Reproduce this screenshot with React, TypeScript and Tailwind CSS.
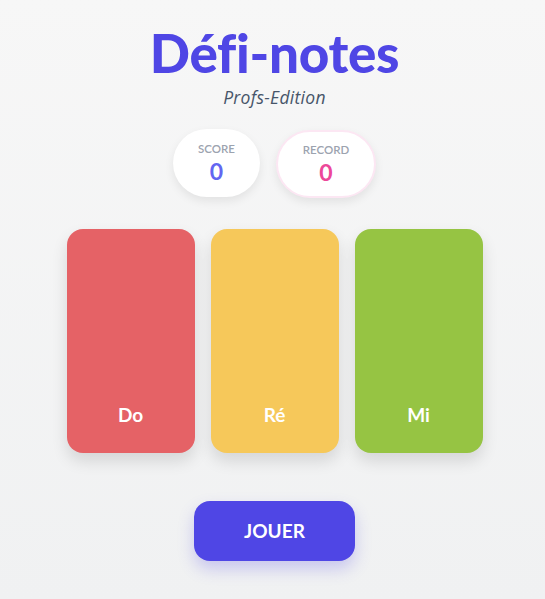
import React from "react";

const notes = [
  { name: "Do", color: "bg-[#e56266]" },
  { name: "Ré", color: "bg-[#f6c85a]" },
  { name: "Mi", color: "bg-[#96c443]" },
];

export default function App() {
  return (
    <div
      className="min-h-[599px] pl-[4px] bg-gradient-to-b from-[#f7f7f7] to-[#f0f1f2] flex flex-col items-center"
      style={{ fontFamily: "Lato, 'Noto Sans', sans-serif" }}
    >
      <h1 className="mt-[24px] text-[53px] leading-[58px] font-black text-[#4f46e5] tracking-[-0.3px]">
        Défi-notes
      </h1>
      <p
        className="mt-[4px] text-[17.5px] leading-[22px] italic text-[#475569] tracking-[0.3px]"
        style={{ fontFamily: "'Open Sans', sans-serif" }}
      >
        Profs-Edition
      </p>

      {/* score / record */}
      <div className="mt-[21px] flex gap-4">
        <div className="w-[87px] h-[68px] rounded-[34px] bg-white shadow-[0_4px_10px_rgba(0,0,0,0.08)] flex flex-col items-center justify-center">
          <span className="text-[11.5px] leading-[14px] font-semibold text-[#9ca3af]">SCORE</span>
          <span className="mt-[2px] text-[23px] leading-[26px] font-bold text-[#6366f1]">0</span>
        </div>
        <div className="w-[100px] h-[68px] mt-px rounded-[34px] bg-white border-2 border-[#fce7f3] shadow-[0_4px_10px_rgba(0,0,0,0.08)] flex flex-col items-center justify-center">
          <span className="text-[11.5px] leading-[14px] font-semibold text-[#9ca3af]">RECORD</span>
          <span className="mt-[2px] text-[23px] leading-[26px] font-bold text-[#ec4899]">0</span>
        </div>
      </div>

      {/* note cards */}
      <div className="mt-[31px] flex gap-4">
        {notes.map((n) => (
          <div
            key={n.name}
            className={`${n.color} w-[128px] h-[224px] rounded-[16px] shadow-[0_8px_16px_rgba(0,0,0,0.12)] flex items-end justify-center pb-[26px]`}
          >
            <span className="text-[19px] leading-[24px] font-bold text-white">{n.name}</span>
          </div>
        ))}
      </div>

      <button className="mt-[48px] w-[161px] h-[60px] rounded-[16px] bg-[#4f46e5] text-white text-[19px] font-bold shadow-[0_8px_16px_rgba(79,70,229,0.25)]">
        JOUER
      </button>
    </div>
  );
}
